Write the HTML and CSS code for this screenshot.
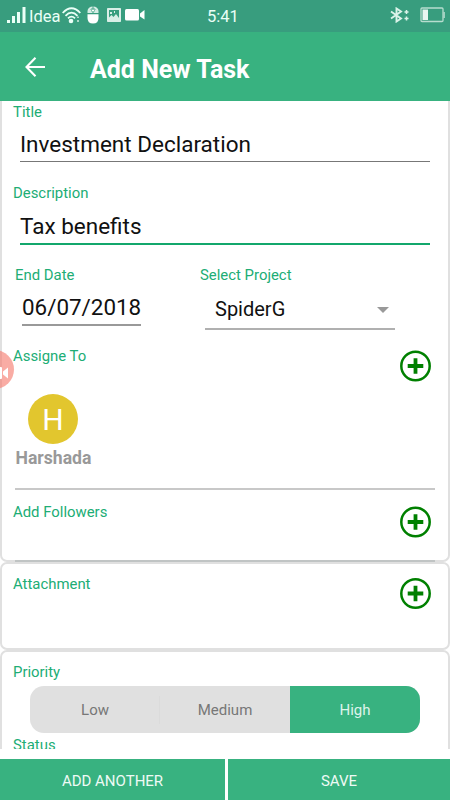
FILE: index.html
```
<!DOCTYPE html>
<html>
<head>
<meta charset="utf-8">
<meta name="viewport" content="width=device-width, initial-scale=1">
<title>Add New Task</title>
<link rel="stylesheet" href="styles.css">
</head>
<body>
<div class="screen">

  <div class="statusbar">
    <div class="status-left">
      <svg class="signal" width="19" height="16" viewBox="0 0 19 16" fill="#eafff7">
        <rect x="0" y="13" width="3" height="3"/><rect x="5" y="9" width="3" height="7"/><rect x="10" y="5" width="3" height="11"/><rect x="15.500" y="0" width="3" height="16"/>
      </svg>
      <span class="carrier">Idea</span>
      <svg class="wifi" width="19" height="17" viewBox="0 0 19 17" fill="none" stroke="#eafff7" stroke-width="1.800">
        <path d="M.7 6 Q9.500 -3.500 18.300 6 M3.500 8.800 Q9.500 2.500 15.500 8.800 M6 11.300 Q9.500 8 13 11.300"/>
        <circle cx="9" cy="14" r="2.300" fill="#eafff7" stroke="none"/>
        <path d="M16 9.500v1.500M16 13v2" stroke-width="1.800" stroke="#b9e0d2"/>
      </svg>
      <svg class="mouse" width="12" height="18" viewBox="0 0 12 18">
        <path d="M.5 7V5Q1 .5 6 .5T11.500 5V7Z" fill="#d5ece4"/>
        <path d="M.5 8.200h11V12q0 5.500-5.500 5.500T.5 12Z" fill="#fff"/>
        <path d="M6 0v2M3.500 3.500 6 2l2.500 1.500M6 4v4" stroke="#389d7e" stroke-width=".7" fill="none"/>
        <circle cx="6" cy="4.500" r="1.500" fill="#fff" stroke="#389d7e" stroke-width=".7"/>
      </svg>
      <svg class="photo" width="14" height="14" viewBox="0 0 14 14">
        <rect width="14" height="14" rx=".8" fill="#d9eee7"/>
        <path d="M2 2h10v8L9 6 6.500 9 4.500 7 2 9.500Z" fill="#389d7e"/>
        <path d="M3 4h2v2H3Z M7 3h1v2H7Z" fill="#d9eee7"/>
      </svg>
      <svg class="cam" width="20" height="12" viewBox="0 0 20 12" fill="#fff">
        <rect width="14" height="11.500" rx="1.500"/><path d="M15 4.500 19.500 1v9.500L15 7.500Z"/>
      </svg>
    </div>
    <span class="clock">5:41</span>
    <div class="status-right">
      <svg width="19" height="16" viewBox="0 0 19 16" fill="none" stroke="#dcf3ea" stroke-width="1.900">
        <path d="M1 4.500 11 11.500 6.500 14.500V1.500L11 4.500 1 11.500"/>
        <path d="M14.500 5h4M16.500 3v4M14.500 11.500h4M16.500 9.500v4" stroke-width="1.500"/>
      </svg>
      <svg width="25" height="16" viewBox="0 0 25 16">
        <rect x="1" y="1" width="22" height="13.500" rx="1" fill="none" stroke="#b7ddcf" stroke-width="1.300"/>
        <rect x="2.500" y="2.500" width="5.500" height="10.500" fill="#e9f6f1"/>
        <rect x="23.500" y="5" width="1.300" height="6" fill="#b7ddcf"/>
      </svg>
    </div>
  </div>

  <div class="appbar">
    <svg class="back" width="20" height="20" viewBox="0 0 20 20" fill="none" stroke="#fff" stroke-width="2.100">
      <path d="M20 10H1.500M10.500 .8 1.500 10l9 9.200"/>
    </svg>
    <span class="page-title">Add New Task</span>
  </div>

  <div class="content">
    <div class="card card-main">
      <div class="label">Title</div>
      <div class="field field-title">Investment Declaration</div>

      <div class="label label-desc">Description</div>
      <div class="field field-active">Tax benefits</div>

      <div class="row">
        <div class="col-date">
          <div class="label">End Date</div>
          <div class="date">06/07/2018</div>
        </div>
        <div class="col-project">
          <div class="label">Select Project</div>
          <div class="select"><span>SpiderG</span><i class="arrow"></i></div>
        </div>
      </div>

      <div class="section assign">
        <div class="label">Assigne To</div>
        <svg class="plus" width="32" height="32" viewBox="0 0 32 32" fill="none" stroke="#008000">
          <circle cx="15.500" cy="16" r="14.200" stroke-width="2.500"/><path d="M7.700 16h15.600M15.500 8.200v15.600" stroke-width="3.800"/>
        </svg>
      </div>
      <div class="person">
        <div class="avatar">H</div>
        <div class="person-name">Harshada</div>
      </div>

      <div class="section followers">
        <div class="label">Add Followers</div>
        <svg class="plus" width="32" height="32" viewBox="0 0 32 32" fill="none" stroke="#008000">
          <circle cx="15.500" cy="16" r="14.200" stroke-width="2.500"/><path d="M7.700 16h15.600M15.500 8.200v15.600" stroke-width="3.800"/>
        </svg>
      </div>
    </div>

    <div class="card card-attach">
      <div class="section">
        <div class="label">Attachment</div>
        <svg class="plus" width="32" height="32" viewBox="0 0 32 32" fill="none" stroke="#008000">
          <circle cx="15.500" cy="15.500" r="14.200" stroke-width="2.500"/><path d="M7.700 15.500h15.600M15.500 7.700v15.600" stroke-width="3.800"/>
        </svg>
      </div>
    </div>

    <div class="card card-priority">
      <div class="label">Priority</div>
      <div class="segments">
        <div class="segment">Low</div>
        <div class="divider"></div>
        <div class="segment">Medium</div>
        <div class="segment selected">High</div>
      </div>
      <div class="label label-status">Status</div>
    </div>
  </div>

  <div class="footer">
    <div class="btn btn-another">ADD ANOTHER</div>
    <div class="btn btn-save">SAVE</div>
  </div>

  <!-- screen recorder bubble -->
  <div class="recorder">
    <svg width="14" height="12" viewBox="0 0 14 12" fill="#fff"><rect width="8" height="12" rx="1"/><path d="M9 4.500 14 .5v11L9 7.500Z"/></svg>
  </div>
</div>
</body>
</html>
```
FILE: styles.css
```
* {
  box-sizing: border-box;
}
body {
  margin: 0;
  background: #fff;
  font-family: Roboto, sans-serif;
}
.screen {
  position: relative;
  display: flex;
  flex-direction: column;
  width: 450px;
  height: 800px;
  overflow: hidden;
}

/* status bar */
.statusbar {
  display: flex;
  flex: none;
  justify-content: space-between;
  height: 32px;
  padding: 0 5px 0 7px;
  background: #389d7e;
  color: #eafff7;
}
.status-left {
  display: flex;
  width: 200px;
}
.signal {
  margin-top: 7px;
}
.carrier {
  width: 30px;
  margin: 0 3px;
  font-size: 16.5px;
  line-height: 34px;
}
.wifi {
  margin-top: 7px;
}
.mouse {
  margin: 6px 0 0 6px;
}
.photo {
  margin: 8px 0 0 8px;
}
.cam {
  margin: 9px 0 0 4px;
}
.clock {
  flex: 1;
  font-size: 16.5px;
  line-height: 34px;
}
.status-right {
  display: flex;
  gap: 11px;
  padding-top: 7px;
}

.appbar {
  display: flex;
  flex: none;
  align-items: center;
  height: 69px;
  padding-left: 25px;
  background: #38b280;
}
.back {
  margin-top: 1px;
}
.page-title {
  margin: 6px 0 0 45px;
  color: #fff;
  font-size: 25px;
  font-weight: bold;
}

/* form */
.content {
  flex: none;
  height: 648px;
  overflow: hidden;
}
.card {
  border: 2px solid #e0e0e0;
  border-radius: 7px;
}
.label {
  padding-left: 11px;
  color: #20ad75;
  font-size: 14.9px;
  line-height: 20px;
}
.card-main {
  height: 461px;
  padding-top: 1px;
  border-top: none;
  border-radius: 0 0 7px 7px;
}
.field {
  margin: 0 18px;
  color: #111;
  font-size: 22.5px;
}
.field-title {
  height: 40px;
  border-bottom: 1px solid #777;
  line-height: 45px;
}
.label-desc {
  margin-top: 21px;
}
.field-active {
  height: 42px;
  border-bottom: 2px solid #13a76c;
  line-height: 46px;
}
.row {
  display: flex;
  margin-top: 20px;
}
.col-date {
  width: 185px;
  padding-left: 2px;
}
.date {
  width: 119px;
  height: 41px;
  margin-left: 18px;
  border-bottom: 2px solid #999;
  color: #111;
  font-size: 22.4px;
  line-height: 45px;
  text-align: center;
}
.col-project {
  padding-left: 2px;
}
.select {
  display: flex;
  align-items: center;
  justify-content: space-between;
  width: 190px;
  height: 45px;
  margin-left: 16px;
  padding: 4px 6px 0 10px;
  border-bottom: 2px solid #b0b0b0;
  color: #111;
  font-size: 20px;
}
.arrow {
  margin-top: 3px;
  border: 6px solid transparent;
  border-top-color: #999;
  border-bottom: none;
}
.section {
  display: flex;
  justify-content: space-between;
}
.plus {
  margin: 4px 16px 0 0;
}
.assign {
  margin-top: 16px;
}
.person {
  width: 102px;
  height: 94px;
  margin-top: 12px;
  text-align: center;
}
.avatar {
  width: 50px;
  height: 50px;
  margin: 0 auto;
  border-radius: 50%;
  background: #e2c62e;
  color: #fff;
  font-size: 30px;
  line-height: 51px;
}
.person-name {
  padding-left: 1px;
  color: #999;
  font-size: 17.6px;
  font-weight: bold;
  line-height: 28px;
}
.followers {
  height: 74px;
  margin: 0 13px;
  padding-top: 12px;
  border-top: 2px solid #c8c8c8;
  border-bottom: 2px solid #c0c4c4;
}
.followers .label {
  padding-left: 0;
  margin-left: -2px;
}
.followers .plus {
  margin-right: 3px;
}
.card-attach {
  height: 88px;
  padding-top: 10px;
}
.card-priority {
  height: 140px;
  padding-top: 10px;
}
.segments {
  display: flex;
  width: 390px;
  height: 47px;
  margin: 4px 0 0 28px;
  border-radius: 14px;
  background: #e0e0e0;
  overflow: hidden;
}
.segment {
  width: 130px;
  color: #777;
  font-size: 15px;
  line-height: 49px;
  text-align: center;
}
.divider {
  width: 1px;
  height: 28px;
  margin: 10px 0 0 -1px;
  background: #dbdbdb;
}
.selected {
  background: #38b280;
  color: #def4eb;
}
.label-status {
  margin-top: 2px;
}

.footer {
  display: flex;
  gap: 3px;
  height: 41px;
  margin-top: 10px;
}
.btn {
  background: #38b280;
  color: #eefaf5;
  font-size: 15px;
  line-height: 44px;
  text-align: center;
}
.btn-another {
  width: 225px;
}
.btn-save {
  flex: 1;
}

.recorder {
  position: absolute;
  left: -25px;
  top: 350px;
  width: 39px;
  height: 39px;
  padding: 14px 0 0 19px;
  border-radius: 50%;
  background: rgba(246, 128, 115, .65);
}
```
